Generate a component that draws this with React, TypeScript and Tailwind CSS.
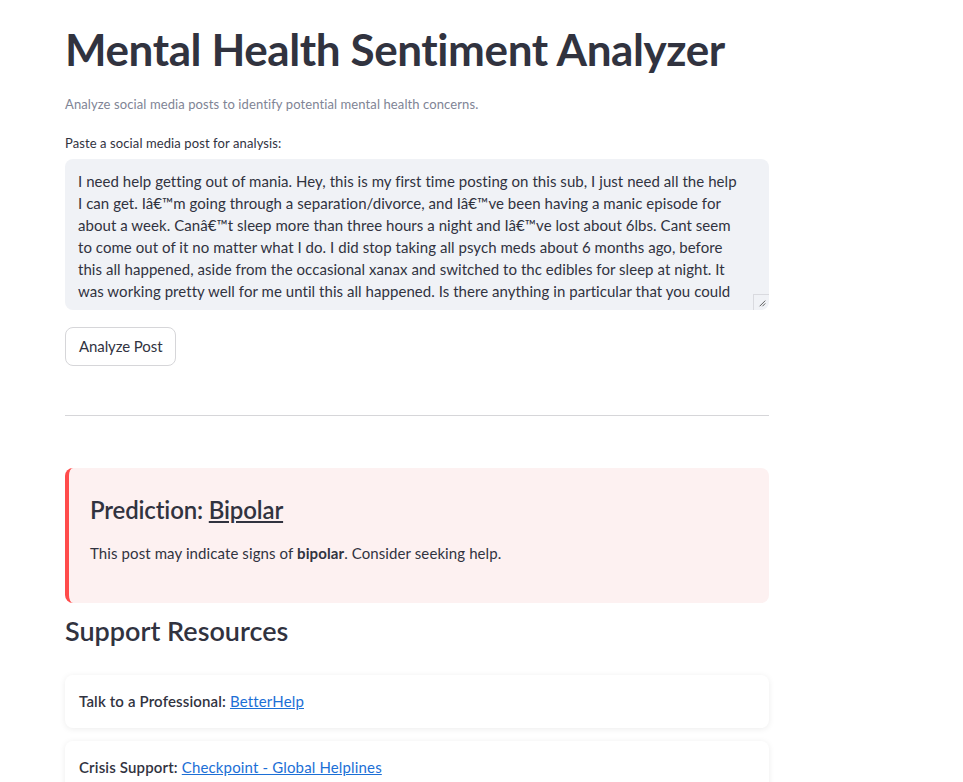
import { useState } from "react";

const POST =
  "I need help getting out of mania. Hey, this is my first time posting on this sub, I just need all the help I can get. Iâ€™m going through a separation/divorce, and Iâ€™ve been having a manic episode for about a week. Canâ€™t sleep more than three hours a night and Iâ€™ve lost about 6lbs. Cant seem to come out of it no matter what I do. I did stop taking all psych meds about 6 months ago, before this all happened, aside from the occasional xanax and switched to thc edibles for sleep at night. It was working pretty well for me until this all happened. Is there anything in particular that you could do or take to help you come down? I feel like I am losing my mind.";

function ResizeGrip() {
  return (
    <div className="absolute right-0 bottom-0 w-[16px] h-[16px] border-t border-l border-[#d9dadf] rounded-br-lg">
      <svg viewBox="0 0 16 16" className="w-full h-full">
        <line x1="6" y1="12" x2="12" y2="6" stroke="#555" strokeWidth="1" />
        <line x1="9" y1="12" x2="12" y2="9" stroke="#555" strokeWidth="1" />
      </svg>
    </div>
  );
}

export default function App() {
  const [post, setPost] = useState(POST);

  return (
    <div className="min-h-screen bg-white text-[#31333f] font-['Lato','Noto_Sans',sans-serif]">
      <div className="pl-[65px] w-[769px] pt-[22px]">
        <h1 className="text-[44px] leading-[54px] font-bold tracking-[-0.4px]">
          Mental Health Sentiment Analyzer
        </h1>

        <p className="mt-[19px] text-[13px] text-[#808495] tracking-[0.1px]">
          Analyze social media posts to identify potential mental health concerns.
        </p>

        <label className="block mt-[19px] text-[13px] tracking-[0.1px]">
          Paste a social media post for analysis:
        </label>
        <div className="relative mt-[6px] h-[151px] pt-[11px] bg-[#f0f2f6] rounded-lg">
          <textarea
            value={post}
            onChange={e => setPost(e.target.value)}
            className="block w-full h-[132px] pl-[13px] pr-[29px] bg-transparent text-[15px] leading-[22px] tracking-[0.05px] outline-none resize-none overflow-hidden"
          />
          <ResizeGrip />
        </div>

        <button className="mt-[17px] h-[39px] px-[13px] border border-[#d6d6d9] rounded-lg bg-white text-[15px] tracking-[-0.1px]">
          Analyze Post
        </button>

        <hr className="mt-[49px] border-t border-[#d6d6d9]" />

        <div className="mt-[52px] h-[135px] bg-[#fdf1f1] border-l-4 border-[#ff4b4b] rounded-lg pl-[21px] pt-[26px]">
          <h3 className="text-[24px] leading-[32px] font-semibold tracking-[-0.15px]">
            Prediction: <u>Bipolar</u>
          </h3>
          <p className="mt-[16px] text-[15px] tracking-[0.1px]">
            This post may indicate signs of <b>bipolar</b>. Consider seeking help.
          </p>
        </div>

        <h2 className="mt-[10px] text-[27px] leading-[36px] font-semibold">
          Support Resources
        </h2>

        <div className="mt-[26px] flex flex-col gap-[13px]">
          <div className="h-[53px] flex items-center px-[14px] bg-white rounded-lg shadow-[0_1px_6px_rgba(0,0,0,0.08)] text-[15px] tracking-[0.15px]">
            <b className="font-semibold">Talk to a Professional:</b>
            <a href="#" className="ml-1 text-[#1c6fd6] underline">BetterHelp</a>
          </div>
          <div className="h-[53px] flex items-center px-[14px] bg-white rounded-lg shadow-[0_1px_6px_rgba(0,0,0,0.08)] text-[15px] tracking-[0.15px]">
            <b className="font-semibold">Crisis Support:</b>
            <a href="#" className="ml-1 text-[#1c6fd6] underline">Checkpoint - Global Helplines</a>
          </div>
        </div>
      </div>
    </div>
  );
}
